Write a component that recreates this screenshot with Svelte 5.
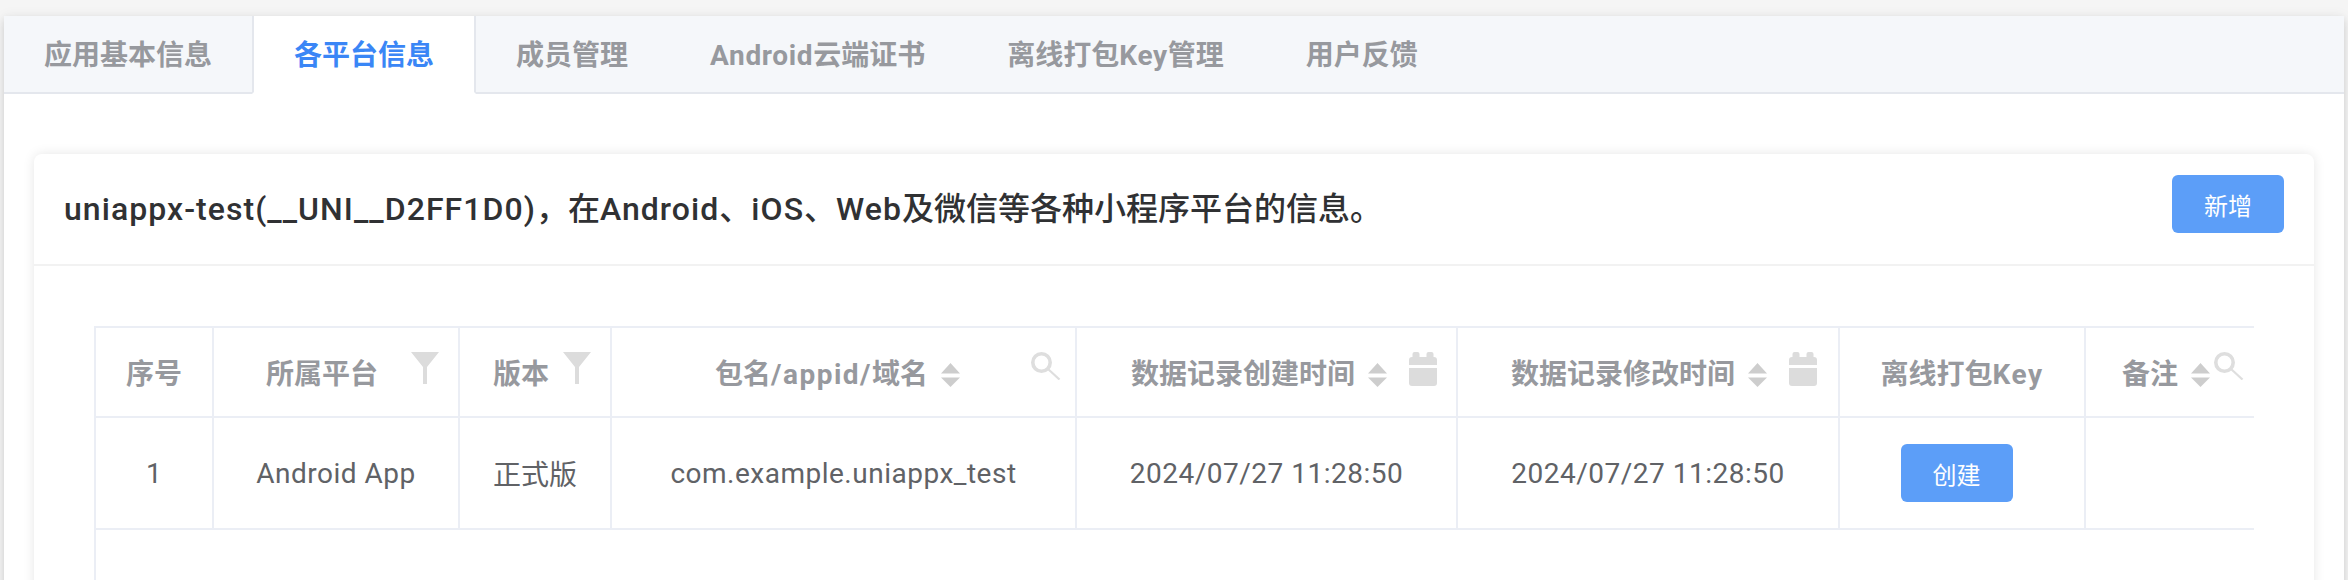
<script>
    const tabs = ["应用基本信息", "各平台信息", "成员管理", "Android云端证书", "离线打包Key管理", "用户反馈"];
    const activeTab = 1;

    // split a label so the latin runs can get their own spacing
    const parts = (text) => text.split(/([A-Za-z0-9_\-()\/]+)/).filter(Boolean);
    const isLatin = (part) => /^[A-Za-z0-9_\-()\/]+$/.test(part);
</script>

{#snippet label(text)}
    <span>{#each parts(text) as part}{#if isLatin(part)}<span class="wide">{part}</span>{:else}{part}{/if}{/each}</span>
{/snippet}

{#snippet filterIcon()}
    <svg class="ico ico-filter" width="28" height="32" viewBox="0 0 28 32">
        <path d="M0 0H28L16 15V32H12V15Z" fill="#dcdcdc" />
    </svg>
{/snippet}

{#snippet sortIcon()}
    <svg class="ico ico-sort" width="19" height="24" viewBox="0 0 19 24">
        <path d="M9.5 0L19 10.5H0Z" fill="#cdcdcd" />
        <path d="M0 14.5H19L9.5 24Z" fill="#cdcdcd" />
    </svg>
{/snippet}

{#snippet searchIcon()}
    <svg class="ico ico-search" width="30" height="28" viewBox="0 0 30 28">
        <circle cx="10.5" cy="10.5" r="8.7" fill="none" stroke="#dedede" stroke-width="3.6" />
        <path d="M17 17L28.5 27.5" stroke="#dedede" stroke-width="2.2" fill="none" />
    </svg>
{/snippet}

{#snippet calendarIcon()}
    <svg class="ico ico-cal" width="28" height="34" viewBox="0 0 28 34">
        <rect x="3.5" y="0" width="7" height="8" rx="2" fill="#dcdcdc" />
        <rect x="17.5" y="0" width="7" height="8" rx="2" fill="#dcdcdc" />
        <path d="M3 5H25a3 3 0 0 1 3 3V13H0V8a3 3 0 0 1 3-3Z" fill="#dcdcdc" />
        <path d="M0 16H28V31a3 3 0 0 1-3 3H3a3 3 0 0 1-3-3Z" fill="#dcdcdc" />
    </svg>
{/snippet}

<div class="panel">
    <div class="tabs">
        {#each tabs as tab, i}
            <div class="tab" class:active={i === activeTab}>{@render label(tab)}</div>
        {/each}
    </div>

    <div class="content">
        <div class="card">
            <div class="card-head">
                <div class="title">{@render label("uniappx-test(__UNI__D2FF1D0)，在Android、iOS、Web及微信等各种小程序平台的信息。")}</div>
                <button class="btn">新增</button>
            </div>
            <div class="card-body">
                <div class="table-wrap">
                    <table>
                        <colgroup>
                            <col style="width:118px" />
                            <col style="width:246px" />
                            <col style="width:152px" />
                            <col style="width:465px" />
                            <col style="width:381px" />
                            <col style="width:382px" />
                            <col style="width:246px" />
                            <col style="width:168px" />
                        </colgroup>
                        <thead>
                            <tr>
                                <th><div class="th center">序号</div></th>
                                <th>
                                    <div class="th th-platform">
                                        <span>所属平台</span>
                                        {@render filterIcon()}
                                    </div>
                                </th>
                                <th>
                                    <div class="th th-version">
                                        <span>版本</span>
                                        {@render filterIcon()}
                                    </div>
                                </th>
                                <th>
                                    <div class="th th-package">
                                        {@render label("包名/appid/域名")}
                                        {@render sortIcon()}
                                        {@render searchIcon()}
                                    </div>
                                </th>
                                <th>
                                    <div class="th th-created">
                                        <span>数据记录创建时间</span>
                                        {@render sortIcon()}
                                        {@render calendarIcon()}
                                    </div>
                                </th>
                                <th>
                                    <div class="th th-updated">
                                        <span>数据记录修改时间</span>
                                        {@render sortIcon()}
                                        {@render calendarIcon()}
                                    </div>
                                </th>
                                <th><div class="th center">{@render label("离线打包Key")}</div></th>
                                <th>
                                    <div class="th th-remark">
                                        <span>备注</span>
                                        {@render sortIcon()}
                                        {@render searchIcon()}
                                    </div>
                                </th>
                            </tr>
                        </thead>
                        <tbody>
                            <tr>
                                <td class="latin">1</td>
                                <td class="latin">Android App</td>
                                <td>正式版</td>
                                <td class="latin">com.example.uniappx_test</td>
                                <td class="latin">2024/07/27 11:28:50</td>
                                <td class="latin">2024/07/27 11:28:50</td>
                                <td><button class="btn btn-row">创建</button></td>
                                <td></td>
                            </tr>
                        </tbody>
                    </table>
                </div>
            </div>
        </div>
    </div>
</div>

<style>
    :global(body) {
        background: #f5f5f5;
        height: 580px;
        overflow: hidden;
    }
    .panel {
        margin: 16px 4px 0;
        height: 700px;
        background: #fff;
        box-shadow: 0 4px 8px rgba(0, 0, 0, .12), 0 0 12px rgba(0, 0, 0, .06);
        font-family: Roboto, "Noto Sans CJK SC", sans-serif;
    }
    .wide {
        letter-spacing: var(--latin-gap);
    }
    .tabs {
        display: flex;
        height: 78px;
        box-sizing: border-box;
        background: #f5f7fa;
        border-bottom: 2px solid #e4e7ed;
    }
    .tab {
        --latin-gap: .65px;
        box-sizing: border-box;
        height: 78px;
        margin-left: -2px;
        padding: 0 40px;
        border: solid transparent;
        border-width: 0 2px;
        font-size: 28px;
        font-weight: 700;
        line-height: 80px;
        color: #97999e;
        white-space: nowrap;
    }
    .tab.active {
        background: #fff;
        color: #3a86f6;
        border-color: #e4e7ed;
        border-bottom: 2px solid #fff;
    }
    .content {
        padding: 60px 30px 0;
    }
    .card {
        height: 600px;
        background: #fff;
        border-radius: 8px;
        box-shadow: 0 0 12px rgba(0, 0, 0, .1);
    }
    .card-head {
        display: flex;
        justify-content: space-between;
        align-items: center;
        box-sizing: border-box;
        height: 112px;
        padding: 21px 30px 31px;
        border-bottom: 2px solid #f2f2f2;
    }
    .title {
        --latin-gap: 1.05px;
        font-size: 32px;
        font-weight: 500;
        color: #303133;
        white-space: nowrap;
        position: relative;
        top: 2px;
    }
    .btn {
        box-sizing: border-box;
        width: 112px;
        height: 58px;
        border: none;
        border-radius: 6px;
        padding: 0;
        background: #5c9ef8;
        color: #fff;
        font-family: inherit;
        font-size: 24px;
    }
    .btn-row {
        margin-right: 11px;
    }
    .card-body {
        padding: 60px 60px 0;
    }
    .table-wrap {
        height: 400px;
        overflow: hidden;
        border-left: 2px solid #ebeef5;
        border-top: 2px solid #ebeef5;
    }
    table {
        table-layout: fixed;
        border-collapse: separate;
        border-spacing: 0;
        width: 2158px;
    }
    th, td {
        box-sizing: border-box;
        padding: 0;
        border-right: 2px solid #ebeef5;
        border-bottom: 2px solid #ebeef5;
        text-align: center;
        white-space: nowrap;
    }
    th:last-child, td:last-child {
        border-right: none;
    }
    th {
        height: 90px;
    }
    td {
        height: 112px;
        font-size: 28px;
        color: #606266;
    }
    td.latin {
        letter-spacing: .5px;
    }
    .th {
        --latin-gap: 1.5px;
        display: flex;
        align-items: center;
        font-size: 28px;
        font-weight: 700;
        color: #97999e;
    }
    .center {
        justify-content: center;
    }
    .ico {
        flex: none;
    }
    .ico-filter {
        margin-bottom: 8px;
    }
    .ico-sort {
        margin-top: 6px;
    }
    .ico-search {
        margin-bottom: 12px;
    }
    .ico-cal {
        margin-bottom: 6px;
        margin-left: 22px;
    }
    .th-platform {
        padding-left: 52px;
    }
    .th-platform .ico-filter {
        margin-left: 33px;
    }
    .th-version {
        padding-left: 33px;
    }
    .th-version .ico-filter {
        margin-left: 14px;
    }
    .th-package {
        padding-left: 103px;
    }
    .th-package .ico-sort, .th-created .ico-sort, .th-updated .ico-sort, .th-remark .ico-sort {
        margin-left: 13px;
    }
    .th-package .ico-search {
        margin-left: 71px;
    }
    .th-created {
        padding-left: 54px;
    }
    .th-updated {
        padding-left: 53px;
    }
    .th-remark {
        padding-left: 36px;
    }
    .th-remark .ico-search {
        margin-left: 4px;
    }
</style>
